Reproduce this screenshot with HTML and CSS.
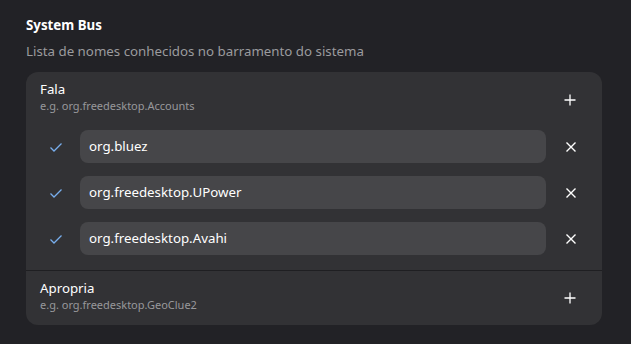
FILE: index.html
```html
<!DOCTYPE html>
<html lang="pt">
<head>
  <meta charset="UTF-8">
  <meta name="viewport" content="width=device-width, initial-scale=1.0">
  <title>System Bus</title>
  <link rel="stylesheet" href="styles.css">
</head>
<body>
  <div class="group">
    <h2 class="group-title">System Bus</h2>
    <p class="group-desc">Lista de nomes conhecidos no barramento do sistema</p>

    <div class="card">
      <!-- Fala -->
      <div class="row">
        <div class="row-text">
          <div class="row-title">Fala</div>
          <div class="row-subtitle">e.g. org.freedesktop.Accounts</div>
        </div>
        <button class="icon-btn" title="Adicionar">
          <svg width="16" height="16" viewBox="0 0 16 16"><path d="M8 2.5v11M2.5 8h11" stroke="#fff" stroke-width="1.3" fill="none"/></svg>
        </button>
      </div>

      <div class="entries">
        <div class="entry-row">
          <span class="check"><svg width="16" height="16" viewBox="0 0 16 16"><path d="M2.5 8.5l3.5 3.5 7.5-7.5" stroke="#78aeed" stroke-width="1.3" fill="none"/></svg></span>
          <div class="entry">org.bluez</div>
          <button class="icon-btn" title="Remover">
            <svg width="16" height="16" viewBox="0 0 16 16"><path d="M3.5 3.5l9 9M12.5 3.5l-9 9" stroke="#fff" stroke-width="1.4" fill="none"/></svg>
          </button>
        </div>
        <div class="entry-row">
          <span class="check"><svg width="16" height="16" viewBox="0 0 16 16"><path d="M2.5 8.5l3.5 3.5 7.5-7.5" stroke="#78aeed" stroke-width="1.3" fill="none"/></svg></span>
          <div class="entry">org.freedesktop.UPower</div>
          <button class="icon-btn" title="Remover">
            <svg width="16" height="16" viewBox="0 0 16 16"><path d="M3.5 3.5l9 9M12.5 3.5l-9 9" stroke="#fff" stroke-width="1.4" fill="none"/></svg>
          </button>
        </div>
        <div class="entry-row">
          <span class="check"><svg width="16" height="16" viewBox="0 0 16 16"><path d="M2.5 8.5l3.5 3.5 7.5-7.5" stroke="#78aeed" stroke-width="1.3" fill="none"/></svg></span>
          <div class="entry">org.freedesktop.Avahi</div>
          <button class="icon-btn" title="Remover">
            <svg width="16" height="16" viewBox="0 0 16 16"><path d="M3.5 3.5l9 9M12.5 3.5l-9 9" stroke="#fff" stroke-width="1.4" fill="none"/></svg>
          </button>
        </div>
      </div>

      <!-- Apropria -->
      <div class="row row-sep">
        <div class="row-text">
          <div class="row-title">Apropria</div>
          <div class="row-subtitle">e.g. org.freedesktop.GeoClue2</div>
        </div>
        <button class="icon-btn" title="Adicionar">
          <svg width="16" height="16" viewBox="0 0 16 16"><path d="M8 2.5v11M2.5 8h11" stroke="#fff" stroke-width="1.3" fill="none"/></svg>
        </button>
      </div>
    </div>
  </div>
</body>
</html>
```

FILE: styles.css
```css
body {
  margin: 0;
  background-color: #222226;
  color: #ffffff;
  font-family: "Noto Sans", sans-serif;
  font-size: 13.3px;
}
.group {
  padding: 16px 29px 0 26px;
}
.group-title {
  margin: 0;
  font-size: 13.3px;
  font-weight: bold;
  line-height: 19px;
}
.group-desc {
  margin: 7px 0 0;
  color: #9b9b9e;
  line-height: 19px;
}
.card {
  margin-top: 11px;
  background-color: #323235;
  border-radius: 12px;
  overflow: hidden;
}
.row {
  display: flex;
  align-items: center;
  height: 55px;
  padding: 0 22px 0 14px;
}
.row-sep {
  border-top: 1px solid #1f1f22;
  height: 54px;
}
.row-text {
  flex: 1;
  padding-bottom: 4px;
}
.row-title {
  line-height: 17px;
}
.row-subtitle {
  font-size: 11px;
  color: #98989b;
  line-height: 16px;
}
.icon-btn {
  width: 20px;
  height: 20px;
  padding: 0;
  border: 0;
  background: none;
  display: flex;
  align-items: center;
  justify-content: center;
}
.entries {
  display: flex;
  flex-direction: column;
  gap: 13px;
  padding: 3px 0 15px;
}
.entry-row {
  display: flex;
  align-items: center;
  padding: 0 21px 0 22px;
}
.check {
  width: 16px;
  height: 16px;
  display: flex;
  margin-right: 16px;
}
.entry {
  flex: 1;
  height: 33px;
  line-height: 33px;
  padding-left: 9px;
  background-color: #464649;
  border-radius: 8px;
  margin-right: 15px;
}
```
